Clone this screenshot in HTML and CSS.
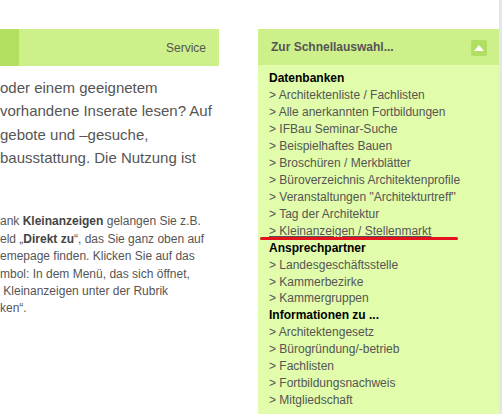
FILE: index.html
```html
<!DOCTYPE html>
<html lang="de">
<head>
    <meta charset="UTF-8">
    <meta name="viewport" content="width=device-width, initial-scale=1.0">
    <title>Kleinanzeigen</title>
    <link rel="stylesheet" href="styles.css">
</head>
<body>
    <div class="page">
        <div class="main">
            <div class="main-head">
                <span class="main-head-strip"></span>
                <span class="main-head-title">Service</span>
            </div>

            <p class="intro">
                oder einem geeignetem<br>
                vorhandene Inserate lesen? Auf<br>
                gebote und –gesuche,<br>
                bausstattung. Die Nutzung ist
            </p>

            <p class="hint">
                ank <b>Kleinanzeigen</b> gelangen Sie z.B.<br>
                eld „<b>Direkt zu</b>“, das Sie ganz oben auf<br>
                emepage finden. Klicken Sie auf das<br>
                mbol: In dem Menü, das sich öffnet,<br>
                &nbsp;Kleinanzeigen unter der Rubrik<br>
                ken“.
            </p>
        </div>

        <div class="quick">
            <div class="quick-head">
                <span class="quick-title">Zur Schnellauswahl...</span>
                <span class="toggle"><span class="toggle-arrow"></span></span>
            </div>

            <div class="quick-body">
                <div class="group">Datenbanken</div>
                <a href="#">&gt; Architektenliste / Fachlisten</a>
                <a href="#">&gt; Alle anerkannten Fortbildungen</a>
                <a href="#">&gt; IFBau Seminar-Suche</a>
                <a href="#">&gt; Beispielhaftes Bauen</a>
                <a href="#">&gt; Broschüren / Merkblätter</a>
                <a href="#">&gt; Büroverzeichnis Architektenprofile</a>
                <a href="#">&gt; Veranstaltungen "Architekturtreff"</a>
                <a href="#">&gt; Tag der Architektur</a>
                <a href="#" class="hover">&gt; Kleinanzeigen / Stellenmarkt</a>

                <div class="group">Ansprechpartner</div>
                <a href="#">&gt; Landesgeschäftsstelle</a>
                <a href="#">&gt; Kammerbezirke</a>
                <a href="#">&gt; Kammergruppen</a>

                <div class="group">Informationen zu ...</div>
                <a href="#">&gt; Architektengesetz</a>
                <a href="#">&gt; Bürogründung/-betrieb</a>
                <a href="#">&gt; Fachlisten</a>
                <a href="#">&gt; Fortbildungsnachweis</a>
                <a href="#">&gt; Mitgliedschaft</a>
            </div>

            <!-- red marker line -->
            <span class="marker"></span>
        </div>

        <div class="edge"></div>
    </div>
</body>
</html>
```

FILE: styles.css
```css
body {
    margin: 0;
    font-family: "Liberation Sans", Arial, sans-serif;
    background-color: #fff;
    color: #555;
    overflow: hidden;
}

.page {
    display: flex;
    height: 414px;
}

.main {
    width: 219px;
    padding-top: 29px;
    flex-shrink: 0;
}

.main-head {
    display: flex;
    align-items: center;
    height: 37px;
    background-color: #cdf08a;
}

.main-head-strip {
    width: 19px;
    height: 100%;
    background-color: #b3e060;
}

.main-head-title {
    margin-left: auto;
    padding-right: 13px;
    font-size: 12px;
    color: #555;
}

.intro {
    margin: 10px 0 0;
    font-size: 15px;
    line-height: 23.3px;
    white-space: nowrap;
}

.hint {
    margin: 44px 0 0;
    font-size: 12px;
    line-height: 17.46px;
    white-space: nowrap;
}

.hint b {
    color: #444;
}

.quick {
    position: relative;
    width: 241px;
    margin-left: 39px;
    padding-top: 29px;
    flex-shrink: 0;
    display: flex;
    flex-direction: column;
}

.quick-head {
    display: flex;
    align-items: center;
    justify-content: space-between;
    height: 37px;
    padding: 0 12px 0 13px;
    background-color: #cdf08a;
}

.quick-title {
    font-size: 12px;
    font-weight: bold;
    color: #555;
}

.toggle {
    display: flex;
    align-items: center;
    justify-content: center;
    width: 16px;
    height: 16px;
    margin-top: 1px;
    border-radius: 2px;
    background-color: #b0df62;
}

.toggle-arrow {
    width: 0;
    height: 0;
    border-left: 5px solid transparent;
    border-right: 5px solid transparent;
    border-bottom: 6px solid #fff;
}

.quick-body {
    flex: 1;
    padding: 5px 11px;
    background-color: #e1fcaa;
    font-size: 12px;
    line-height: 16.93px;
}

.group {
    font-weight: bold;
    color: #000;
}

.quick-body a {
    display: block;
    color: #555;
    text-decoration: none;
    white-space: nowrap;
}

.quick-body a.hover {
    text-decoration: underline;
}

.marker {
    position: absolute;
    left: 2px;
    top: 237px;
    width: 198px;
    height: 3px;
    border-radius: 2px;
    background-color: #e3121c;
}

.edge {
    width: 3px;
    margin-left: auto;
    background-color: #e6e6e6;
}
```
